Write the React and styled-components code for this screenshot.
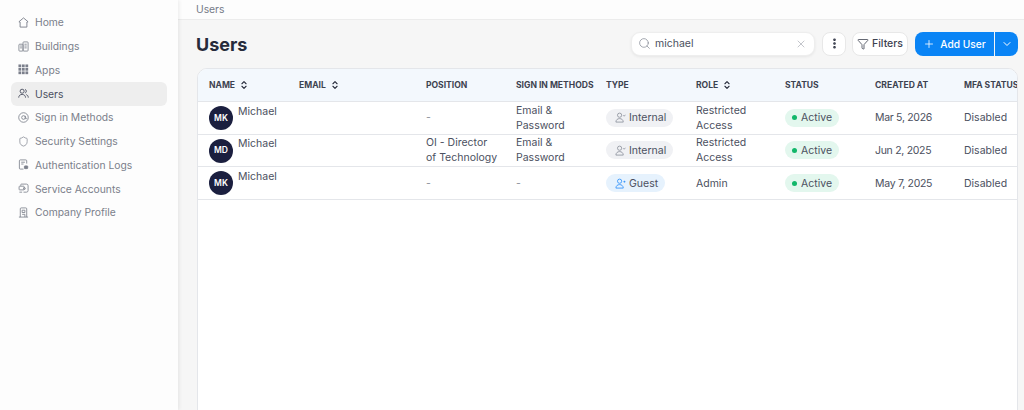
import styled, { createGlobalStyle } from 'styled-components';
import { Search, X, EllipsisVertical, Plus, ChevronDown, ChevronsUpDown, Funnel, Shield } from 'lucide-react';

const GlobalStyle = createGlobalStyle`
  html, body { margin: 0; padding: 0; height: 100%; overflow: hidden; }
  body { font-family: Inter, "Noto Sans", sans-serif; background: #f6f6f6; color: #3d4250; }
  #root { height: 100%; }
`;

const Page = styled.div`
  display: flex;
  height: 410px;
  width: 1024px;
  overflow: hidden;
`;

const Sidebar = styled.nav`
  width: 178px;
  flex-shrink: 0;
  background: #fdfdfd;
  box-shadow: 1px 0 4px rgba(0, 0, 0, 0.08);
  padding: 10.5px 11px 0;
  box-sizing: border-box;
  position: relative;
  z-index: 1;
`;

const NavItem = styled.div`
  display: flex;
  align-items: center;
  gap: 6px;
  height: 23.75px;
  padding-left: 7px;
  font-size: 10.3px;
  border-radius: 6px;
  color: ${(p) => (p.$active ? '#4b5060' : '#7b7f8b')};
  background: ${(p) => (p.$active ? '#eeeeee' : 'transparent')};
  svg { width: 11px; height: 11px; flex-shrink: 0; }
`;

const Main = styled.main`
  flex: 1;
  min-width: 0;
  display: flex;
  flex-direction: column;
`;

const Breadcrumb = styled.div`
  height: 20px;
  flex-shrink: 0;
  background: #fdfdfd;
  border-bottom: 1px solid #ececec;
  padding-left: 18px;
  font-size: 10.3px;
  line-height: 18px;
  color: #767b88;
  box-sizing: border-box;
`;

const Content = styled.div`
  padding: 11px 6px 0 19px;
  display: flex;
  flex-direction: column;
  gap: 12px;
`;

const HeaderRow = styled.div`
  display: flex;
  align-items: center;
  justify-content: space-between;
  height: 25px;
`;

const Title = styled.h1`
  margin: 2px 0 0 -1px;
  font-size: 18px;
  font-weight: 700;
  color: #262b3b;
`;

const Actions = styled.div`
  display: flex;
  align-items: center;
  gap: 7px;
`;

const SearchBox = styled.div`
  width: 184px;
  height: 24px;
  box-sizing: border-box;
  background: #fff;
  border: 1px solid #eeeeee;
  border-radius: 9px;
  box-shadow: 0 1px 3px rgba(0, 0, 0, 0.07);
  display: flex;
  align-items: center;
  padding: 0 7px 0 6px;
  gap: 4px;
  font-size: 10.5px;
  color: #4b5060;
  span { flex: 1; }
`;

const IconButton = styled.button`
  width: 24px;
  height: 24px;
  padding: 0;
  background: #fff;
  border: 1px solid #e8e8e8;
  border-radius: 8px;
  display: flex;
  align-items: center;
  justify-content: center;
  color: #262b3b;
`;

const FilterButton = styled.button`
  width: 56px;
  height: 24px;
  padding: 0;
  margin-left: -1px;
  background: #fff;
  border: 1px solid #e8e8e8;
  border-radius: 8px;
  display: flex;
  align-items: center;
  justify-content: center;
  gap: 3px;
  font: 500 10.5px Inter, sans-serif;
  color: #3d4250;
`;

const SplitButton = styled.div`
  display: flex;
  gap: 1px;
`;

const PrimaryButton = styled.button`
  width: 79px;
  height: 24px;
  padding: 0;
  border: none;
  border-radius: 8px 0 0 8px;
  background: #0a84f5;
  color: #fff;
  display: flex;
  align-items: center;
  justify-content: center;
  gap: 5px;
  font: 500 10.2px Inter, sans-serif;
`;

const CaretButton = styled.button`
  width: 23px;
  height: 24px;
  padding: 0;
  border: none;
  border-radius: 0 8px 8px 0;
  background: #0a84f5;
  color: #fff;
  display: flex;
  align-items: center;
  justify-content: center;
`;

const Card = styled.section`
  background: #fff;
  border: 1px solid #e4e6ea;
  border-radius: 10px 10px 0 0;
  height: 360px;
  width: 821px;
  box-sizing: border-box;
  overflow: hidden;
`;

const Row = styled.div`
  display: grid;
  grid-template-columns: 90px 127px 90px 90px 90px 89px 90px 89px 90px;
  padding-left: 11px;
  align-items: center;
  height: ${(p) => p.$h || 32.67}px;
  box-sizing: border-box;
  border-bottom: 1px solid #e4e6ea;
  white-space: nowrap;
`;

const HeadRow = styled(Row)`
  background: #f3f8fd;
`;

const HeadCell = styled.div`
  display: flex;
  align-items: center;
  gap: 4px;
  font-size: 8.55px;
  font-weight: 700;
  color: #3d4250;
`;

const Cell = styled.div`
  font-size: 10.5px;
  line-height: 15px;
  color: #4b5060;
  max-width: 72px;
  white-space: ${(p) => (p.$wrap ? 'normal' : 'nowrap')};
`;

const Muted = styled(Cell)`
  color: #8c909b;
`;

const DateCell = styled(Cell)`
  letter-spacing: -0.3px;
`;

const NameCell = styled.div`
  align-self: start;
  display: flex;
  align-items: flex-start;
  gap: 5px;
  margin-top: 1.5px;
  font-size: 10.5px;
  line-height: 15px;
  color: #4b5060;
`;

const Avatar = styled.div`
  width: 24px;
  height: 24px;
  margin-top: 2.5px;
  border-radius: 50%;
  background: #1b1f3f;
  color: #fff;
  font-size: 8.5px;
  font-weight: 600;
  display: flex;
  align-items: center;
  justify-content: center;
  flex-shrink: 0;
`;

const PillSlot = styled.div`
  display: flex;
  align-items: center;
`;

const Pill = styled.span`
  display: inline-flex;
  align-items: center;
  gap: 3px;
  height: 18px;
  padding: 0 7px 0 ${(p) => p.$left || 9}px;
  border-radius: 9px;
  font-size: 10.5px;
  color: #4b5060;
  background: ${(p) => p.$bg};
  svg { width: 11px; height: 11px; }
`;

const Dot = styled.i`
  width: 5px;
  height: 5px;
  margin-right: 1px;
  border-radius: 50%;
  background: #12b76a;
`;

const HomeIcon = () => (
  <svg viewBox="0 0 12 12" fill="none" stroke="currentColor" strokeWidth="1" strokeLinejoin="round">
    <path d="M6 1L11 5.2l-1.3.3v5.5H2.3V5.500L1 5.200z" />
  </svg>
);

const BuildingsIcon = () => (
  <svg viewBox="0 0 12 12" fill="none" stroke="currentColor" strokeWidth="0.9">
    <rect x="1" y="3.5" width="4.5" height="7.5" rx="0.8" />
    <rect x="5.5" y="1" width="5.5" height="10" rx="0.8" />
    <path d="M7 3.500h2.500M7 5.500h2.500M7 7.500h2.500M2.300 5.500h2M2.300 7.500h2" />
  </svg>
);

const AppsIcon = () => (
  <svg viewBox="0 0 12 12" fill="currentColor">
    {[0.5, 4.3, 8.1].flatMap((x) =>
      [0.5, 4.3, 8.1].map((y) => <rect key={`${x}-${y}`} x={x} y={y} width="3" height="3" />),
    )}
  </svg>
);

const UsersIcon = () => (
  <svg viewBox="0 0 12 12" fill="none" stroke="currentColor" strokeWidth="1">
    <circle cx="4.500" cy="3.500" r="2.200" />
    <path d="M0.800 10.500c0-2.200 1.600-3.500 3.700-3.500s3.700 1.300 3.700 3.500" />
    <path d="M7.800 1.500a2.200 2.200 0 0 1 0 4M9 7.200c1.300.4 2.200 1.600 2.200 3.300" />
  </svg>
);

const SignInIcon = () => (
  <svg viewBox="0 0 12 12" fill="none" stroke="currentColor" strokeWidth="0.9">
    <circle cx="6" cy="6" r="5.200" />
    <circle cx="6" cy="6" r="2" />
    <path d="M8 4.200v2.500c0 1.200 1.600 1.200 1.600-.4" />
  </svg>
);

const LogsIcon = () => (
  <svg viewBox="0 0 12 12" fill="none" stroke="currentColor" strokeWidth="0.9">
    <path d="M6 11H2.500a1 1 0 0 1-1-1V2a1 1 0 0 1 1-1h6a1 1 0 0 1 1 1v3" />
    <path d="M3.500 3.500h4M3.500 5.500h2.500" />
    <rect x="7" y="7.500" width="3.600" height="3" rx="0.600" fill="currentColor" />
  </svg>
);

const ServiceIcon = () => (
  <svg viewBox="0 0 12 12" fill="none" stroke="currentColor" strokeWidth="0.9">
    <path d="M3 3V2a.8.8 0 0 1 .8-.8h5.400A1.800 1.800 0 0 1 11 3v5.200a1.800 1.800 0 0 1-1.800 1.800H6" />
    <rect x="1.200" y="3.500" width="5.500" height="4" rx="0.600" />
    <circle cx="7" cy="6" r="1" />
    <path d="M1.500 10h3" />
  </svg>
);

const CompanyIcon = () => (
  <svg viewBox="0 0 12 12" fill="none" stroke="currentColor" strokeWidth="0.9">
    <path d="M2.500 11V2a1 1 0 0 1 1-1h5a1 1 0 0 1 1 1v9" />
    <path d="M1 11h10M4.500 3.500h3v2.500h-3zM4.500 8h3v3" />
  </svg>
);

const InternalIcon = () => (
  <svg viewBox="0 0 12 12" fill="none" stroke="#8c909b" strokeWidth="0.9">
    <circle cx="5" cy="3.500" r="2.300" />
    <path d="M1 11c0-2.400 1.700-3.800 4-3.800s4 1.400 4 3.800z" />
    <path d="M9 3.600l1 1 1.400-1.600" />
  </svg>
);

const GuestIcon = () => (
  <svg viewBox="0 0 12 12" fill="none" stroke="#2e90fa" strokeWidth="0.9">
    <circle cx="5" cy="3.500" r="2.300" />
    <path d="M1 11c0-2.400 1.700-3.800 4-3.800s4 1.400 4 3.800z" />
    <path d="M9.200 4h2.200M10.300 3v2" />
  </svg>
);

const SortIcon = () => <ChevronsUpDown size={10} strokeWidth={2.6} color="#262b3b" />;

const navItems = [
  { label: 'Home', icon: <HomeIcon /> },
  { label: 'Buildings', icon: <BuildingsIcon /> },
  { label: 'Apps', icon: <AppsIcon /> },
  { label: 'Users', icon: <UsersIcon />, active: true },
  { label: 'Sign in Methods', icon: <SignInIcon /> },
  { label: 'Security Settings', icon: <Shield strokeWidth={1.5} /> },
  { label: 'Authentication Logs', icon: <LogsIcon /> },
  { label: 'Service Accounts', icon: <ServiceIcon /> },
  { label: 'Company Profile', icon: <CompanyIcon /> },
];

const users = [
  { initials: 'MK', position: '-', methods: 'Email & Password', type: 'Internal', role: 'Restricted Access', created: 'Mar 5, 2026' },
  { initials: 'MD', position: 'OI - Director of Technology', methods: 'Email & Password', type: 'Internal', role: 'Restricted Access', created: 'Jun 2, 2025' },
  { initials: 'MK', position: '-', methods: '-', type: 'Guest', role: 'Admin', created: 'May 7, 2025' },
];

const TextCell = ({ value }) =>
  value === '-' ? <Muted>-</Muted> : <Cell $wrap>{value}</Cell>;

const App = () => (
  <Page>
    <GlobalStyle />
    <Sidebar>
      {navItems.map((item) => (
        <NavItem key={item.label} $active={item.active}>
          {item.icon}
          {item.label}
        </NavItem>
      ))}
    </Sidebar>
    <Main>
      <Breadcrumb>Users</Breadcrumb>
      <Content>
        <HeaderRow>
          <Title>Users</Title>
          <Actions>
            <SearchBox>
              <Search size={13} strokeWidth={1.2} color="#767b88" />
              <span>michael</span>
              <X size={12} strokeWidth={1.2} color="#9a9ea8" />
            </SearchBox>
            <IconButton><EllipsisVertical size={13} strokeWidth={2.8} /></IconButton>
            <FilterButton><Funnel size={12} strokeWidth={1.6} />Filters</FilterButton>
            <SplitButton>
              <PrimaryButton><Plus size={12} strokeWidth={1.6} />Add User</PrimaryButton>
              <CaretButton><ChevronDown size={12} strokeWidth={2} /></CaretButton>
            </SplitButton>
          </Actions>
        </HeaderRow>
        <Card>
          <HeadRow $h={33}>
            <HeadCell>NAME <SortIcon /></HeadCell>
            <HeadCell>EMAIL <SortIcon /></HeadCell>
            <HeadCell>POSITION</HeadCell>
            <HeadCell>SIGN IN METHODS</HeadCell>
            <HeadCell>TYPE</HeadCell>
            <HeadCell>ROLE <SortIcon /></HeadCell>
            <HeadCell>STATUS</HeadCell>
            <HeadCell>CREATED AT</HeadCell>
            <HeadCell>MFA STATUS</HeadCell>
          </HeadRow>
          {users.map((u) => (
            <Row key={u.created}>
              <NameCell><Avatar>{u.initials}</Avatar>Michael</NameCell>
              <div />
              <TextCell value={u.position} />
              <TextCell value={u.methods} />
              <PillSlot>
                {u.type === 'Guest'
                  ? <Pill $bg="#e6f2fd"><GuestIcon />Guest</Pill>
                  : <Pill $bg="#f0f1f4"><InternalIcon />Internal</Pill>}
              </PillSlot>
              <Cell $wrap>{u.role}</Cell>
              <PillSlot><Pill $bg="#e3f7ee" $left={7}><Dot />Active</Pill></PillSlot>
              <DateCell>{u.created}</DateCell>
              <Cell>Disabled</Cell>
            </Row>
          ))}
        </Card>
      </Content>
    </Main>
  </Page>
);

export default App;
